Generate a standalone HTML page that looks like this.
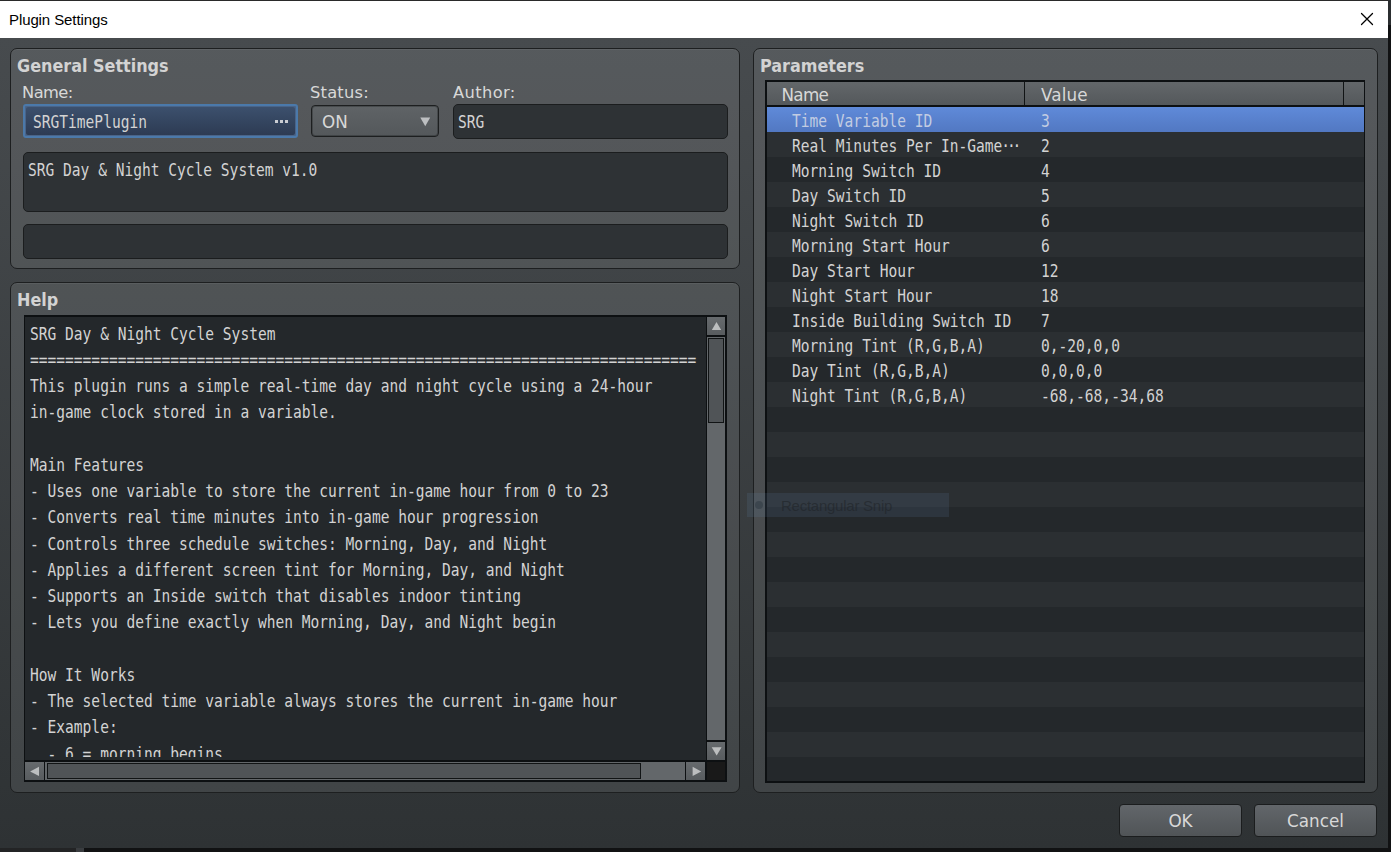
<!DOCTYPE html>
<html lang="en">
<head>
<meta charset="utf-8">
<title>Plugin Settings</title>
<style>
*{box-sizing:border-box;margin:0;padding:0}
html,body{width:1391px;height:852px;overflow:hidden;background:#111213}
body{position:relative;font-family:"DejaVu Sans","Liberation Sans",sans-serif;font-size:16px;color:#d9d9d9}
.abs{position:absolute}
#win{position:absolute;left:0;top:0;width:1388px;height:848px;overflow:hidden;background:#fff}
#titlebar{position:absolute;left:0;top:0;width:1388px;height:38px;background:#fff;border-top:1px solid #2a2a2a}
#title{position:absolute;left:9px;top:9px;font:15px/20px "Liberation Sans",sans-serif;color:#000;letter-spacing:-0.1px}
#client{position:absolute;left:0;top:38px;width:1388px;height:810px;background:linear-gradient(#474b4e,#2e3234)}
.panel{position:absolute;border:1px solid #1d1f20;border-radius:7px;background:rgba(255,255,255,.085);box-shadow:inset 0 1px 0 rgba(255,255,255,.06)}
.ptitle{position:absolute;font:bold 17.6px/20px "DejaVu Sans",sans-serif;color:#d3d3d3;white-space:pre;transform:scaleX(.91);transform-origin:0 0}
.lbl{position:absolute;font:16.8px/20px "DejaVu Sans",sans-serif;color:#d8d8d8;white-space:pre}
.mono{position:absolute;font:17px/20px "DejaVu Sans Mono","Liberation Mono",monospace;color:#d3d3d3;white-space:pre;transform:scaleX(.8565);transform-origin:0 0}
.field{position:absolute;background:#2e3235;border:1px solid #1b1d1e;border-radius:5px}

.sbtn{background:linear-gradient(#666a6d,#585c5f)}
.strack{background:#63676a}
.sthumb{background:#505457;border:1px solid #111415}
.row{position:absolute;left:0;width:597px;height:25px}
.row.even{background:#24282b}
.row.odd{background:#2b2f32}
.row.sel{background:linear-gradient(#5f8ad9,#5278c2)}
.row.sel .mono{color:#c2cce2}
.btn{border:1px solid #1b1d1e;border-radius:4px;background:linear-gradient(#62666a,#505457);text-align:center;font:16.8px/20px "DejaVu Sans",sans-serif;color:#d8d8d8}
.btn span{position:relative;top:6px}
.ell{letter-spacing:-3.7px;margin-left:-1.3px}
</style>
</head>
<body>
<div class="abs" style="left:0;top:848px;width:76px;height:4px;background:#232425"></div>
<div class="abs" style="left:76px;top:848px;width:8px;height:4px;background:#3a3d40"></div>
<div class="abs" style="left:1388px;top:0;width:3px;height:25px;background:#2b2e30"></div>
<div id="win">
 <div id="titlebar"><div id="title">Plugin Settings</div>
  <svg class="abs" style="left:1360px;top:11px" width="14" height="14" viewBox="0 0 14 14"><path d="M1.5 1.5 L12.5 12.5 M12.5 1.5 L1.5 12.5" stroke="#000" stroke-width="1.25" stroke-linecap="round" fill="none"/></svg>
 </div>
 <div id="client"></div>

 <!-- General Settings -->
 <div class="panel" style="left:10px;top:48px;width:730px;height:221px"></div>
 <div class="ptitle" style="left:17px;top:56.4px">General Settings</div>
 <div class="lbl" style="left:22px;top:83px;font-size:16.3px;letter-spacing:-.55px">Name:</div>
 <div class="lbl" style="left:310px;top:83px;font-size:16.3px;letter-spacing:.22px">Status:</div>
 <div class="lbl" style="left:453px;top:83px;font-size:16.3px;letter-spacing:.38px">Author:</div>
 <div class="abs" id="namefield" style="left:23px;top:104px;width:275px;height:34px;border:2px solid #4b79aa;border-radius:3px;background:#4a6488">
   <div class="abs" style="left:1px;top:1px;right:1px;bottom:1px;border-radius:2px;background:linear-gradient(#3c506d,#2d3b53)"></div>
 </div>
 <div class="mono" style="left:33px;top:112px">SRGTimePlugin</div>
 <div class="abs" style="left:275px;top:120px;width:3px;height:3px;background:#c9ccd2;box-shadow:5px 0 0 #c9ccd2,10px 0 0 #c9ccd2"></div>
 <div class="abs" id="status" style="left:311px;top:105px;width:128px;height:32px;border:1px solid #1d1f20;border-radius:4px;background:linear-gradient(#5f6366,#54585b);box-shadow:inset 0 0 0 1px rgba(20,22,24,.3)"></div>
 <div class="lbl" style="left:322px;top:112px">ON</div>
 <svg class="abs" style="left:420px;top:117px" width="11" height="10" viewBox="0 0 11 10"><path d="M0.3 0.5 L10.2 0.5 L5.25 9.3 Z" fill="#bdbfc1"/></svg>
 <div class="field" style="left:453px;top:104px;width:275px;height:35px"></div>
 <div class="mono" style="left:458px;top:112px">SRG</div>
 <div class="field" style="left:23px;top:152px;width:705px;height:60px"></div>
 <div class="mono" style="left:28px;top:160px">SRG Day &amp; Night Cycle System v1.0</div>
 <div class="field" style="left:23px;top:224px;width:705px;height:35px"></div>

 <!-- Help -->
 <div class="panel" style="left:10px;top:282px;width:730px;height:511px"></div>
 <div class="ptitle" style="left:17px;top:290.4px">Help</div>
 <div class="abs" id="helpbox" style="left:24px;top:315px;width:703px;height:467px;background:#0d1012"></div>
 <div class="abs" id="helpview" style="left:25px;top:317px;width:681px;height:443px;background:#24282b;overflow:hidden">
   <div class="abs" style="left:0;top:0;width:681px;height:440px;overflow:hidden"><div class="mono" id="helptext" style="left:5px;top:3.5px;line-height:26.25px">SRG Day &amp; Night Cycle System
============================================================================
This plugin runs a simple real-time day and night cycle using a 24-hour
in-game clock stored in a variable.

Main Features
- Uses one variable to store the current in-game hour from 0 to 23
- Converts real time minutes into in-game hour progression
- Controls three schedule switches: Morning, Day, and Night
- Applies a different screen tint for Morning, Day, and Night
- Supports an Inside switch that disables indoor tinting
- Lets you define exactly when Morning, Day, and Night begin

How It Works
- The selected time variable always stores the current in-game hour
- Example:
  - 6 = morning begins</div></div>
 </div>
 <!-- vertical scrollbar -->
 <div class="abs sbtn" style="left:707px;top:317px;width:18px;height:18px"></div>
 <svg class="abs" style="left:711px;top:321px" width="11" height="10" viewBox="0 0 11 10"><path d="M5.5 0.9 L10.2 9 L0.8 9 Z" fill="#bcbebf"/></svg>
 <div class="abs strack" style="left:707px;top:337px;width:18px;height:403px"></div>
 <div class="abs sthumb" style="left:708px;top:338px;width:16px;height:85px"></div>
 <div class="abs sbtn" style="left:707px;top:742px;width:18px;height:18px"></div>
 <svg class="abs" style="left:711px;top:746px" width="11" height="10" viewBox="0 0 11 10"><path d="M0.7 1.3 L10.6 1.3 L5.65 9.4 Z" fill="#bcbebf"/></svg>
 <!-- horizontal scrollbar -->
 <div class="abs sbtn" style="left:25px;top:762px;width:19px;height:18px"></div>
 <svg class="abs" style="left:29px;top:766px" width="11" height="11" viewBox="0 0 11 11"><path d="M1.1 5.4 L10 0.7 L10 10.1 Z" fill="#bcbebf"/></svg>
 <div class="abs strack" style="left:45px;top:762px;width:640px;height:18px"></div>
 <div class="abs sthumb" style="left:47px;top:763px;width:594px;height:16px"></div>
 <div class="abs sbtn" style="left:686px;top:762px;width:19px;height:18px"></div>
 <svg class="abs" style="left:691px;top:766px" width="11" height="11" viewBox="0 0 11 11"><path d="M1.6 0.8 L10.2 5.4 L1.6 10 Z" fill="#bcbebf"/></svg>
 <div class="abs" style="left:707px;top:762px;width:18px;height:18px;background:#191919"></div>

 <!-- Parameters -->
 <div class="panel" style="left:753px;top:48px;width:625px;height:745px"></div>
 <div class="ptitle" style="left:760px;top:56.4px">Parameters</div>
 <div class="abs" id="ptable" style="left:765px;top:80px;width:600px;height:703px;background:#24282b;border:2px solid #0d1012;border-right-width:1px;overflow:hidden">
   <div class="abs" id="phead" style="left:0;top:0;width:597px;height:23px;background:linear-gradient(#63676a,#54585b)">
     <div class="lbl hl" style="left:14.5px;top:3px;letter-spacing:-.7px">Name</div>
     <div class="abs" style="left:257px;top:0;width:1px;height:23px;background:#111415"></div>
     <div class="lbl hl" style="left:274px;top:3px;letter-spacing:.1px">Value</div>
     <div class="abs" style="left:576px;top:0;width:1px;height:23px;background:#111415"></div>
   </div>
   <div class="abs" style="left:0;top:23px;width:597px;height:2px;background:#0d1012"></div>
   <div class="abs" id="prows" style="left:0;top:25px;width:597px;height:674px;overflow:hidden">
   <div class="row sel" style="top:0px"><div class="mono" style="left:25px;top:4px">Time Variable ID</div><div class="mono" style="left:273.5px;top:4px">3</div></div>
   <div class="row odd" style="top:25px"><div class="mono" style="left:25px;top:4px">Real Minutes Per In-Game<span class="ell">···</span></div><div class="mono" style="left:273.5px;top:4px">2</div></div>
   <div class="row even" style="top:50px"><div class="mono" style="left:25px;top:4px">Morning Switch ID</div><div class="mono" style="left:273.5px;top:4px">4</div></div>
   <div class="row odd" style="top:75px"><div class="mono" style="left:25px;top:4px">Day Switch ID</div><div class="mono" style="left:273.5px;top:4px">5</div></div>
   <div class="row even" style="top:100px"><div class="mono" style="left:25px;top:4px">Night Switch ID</div><div class="mono" style="left:273.5px;top:4px">6</div></div>
   <div class="row odd" style="top:125px"><div class="mono" style="left:25px;top:4px">Morning Start Hour</div><div class="mono" style="left:273.5px;top:4px">6</div></div>
   <div class="row even" style="top:150px"><div class="mono" style="left:25px;top:4px">Day Start Hour</div><div class="mono" style="left:273.5px;top:4px">12</div></div>
   <div class="row odd" style="top:175px"><div class="mono" style="left:25px;top:4px">Night Start Hour</div><div class="mono" style="left:273.5px;top:4px">18</div></div>
   <div class="row even" style="top:200px"><div class="mono" style="left:25px;top:4px">Inside Building Switch ID</div><div class="mono" style="left:273.5px;top:4px">7</div></div>
   <div class="row odd" style="top:225px"><div class="mono" style="left:25px;top:4px">Morning Tint (R,G,B,A)</div><div class="mono" style="left:273.5px;top:4px">0,-20,0,0</div></div>
   <div class="row even" style="top:250px"><div class="mono" style="left:25px;top:4px">Day Tint (R,G,B,A)</div><div class="mono" style="left:273.5px;top:4px">0,0,0,0</div></div>
   <div class="row odd" style="top:275px"><div class="mono" style="left:25px;top:4px">Night Tint (R,G,B,A)</div><div class="mono" style="left:273.5px;top:4px">-68,-68,-34,68</div></div>
   <div class="row even" style="top:300px"></div>
   <div class="row odd" style="top:325px"></div>
   <div class="row even" style="top:350px"></div>
   <div class="row odd" style="top:375px"></div>
   <div class="row even" style="top:400px"></div>
   <div class="row odd" style="top:425px"></div>
   <div class="row even" style="top:450px"></div>
   <div class="row odd" style="top:475px"></div>
   <div class="row even" style="top:500px"></div>
   <div class="row odd" style="top:525px"></div>
   <div class="row even" style="top:550px"></div>
   <div class="row odd" style="top:575px"></div>
   <div class="row even" style="top:600px"></div>
   <div class="row odd" style="top:625px"></div>
   <div class="row even" style="top:650px"></div>
   </div>
 </div>

 <!-- Buttons -->
 <div class="abs btn" style="left:1119px;top:804px;width:123px;height:33px"><span>OK</span></div>
 <div class="abs btn" style="left:1254px;top:804px;width:123px;height:33px"><span>Cancel</span></div>
 <!-- ghost tooltip -->
 <div class="abs" id="ghost" style="left:747px;top:493px;width:202px;height:24px;background:rgba(110,150,195,.13)"></div>
 <div class="abs" style="left:755px;top:501px;width:8px;height:8px;border-radius:50%;background:rgba(40,50,60,.45)"></div>
 <div class="abs" id="ghosttxt" style="left:781px;top:496px;font:15px/20px 'Liberation Sans',sans-serif;color:rgba(28,31,35,.5);white-space:pre;letter-spacing:-.25px">Rectangular Snip</div>
</div>
</body>
</html>
